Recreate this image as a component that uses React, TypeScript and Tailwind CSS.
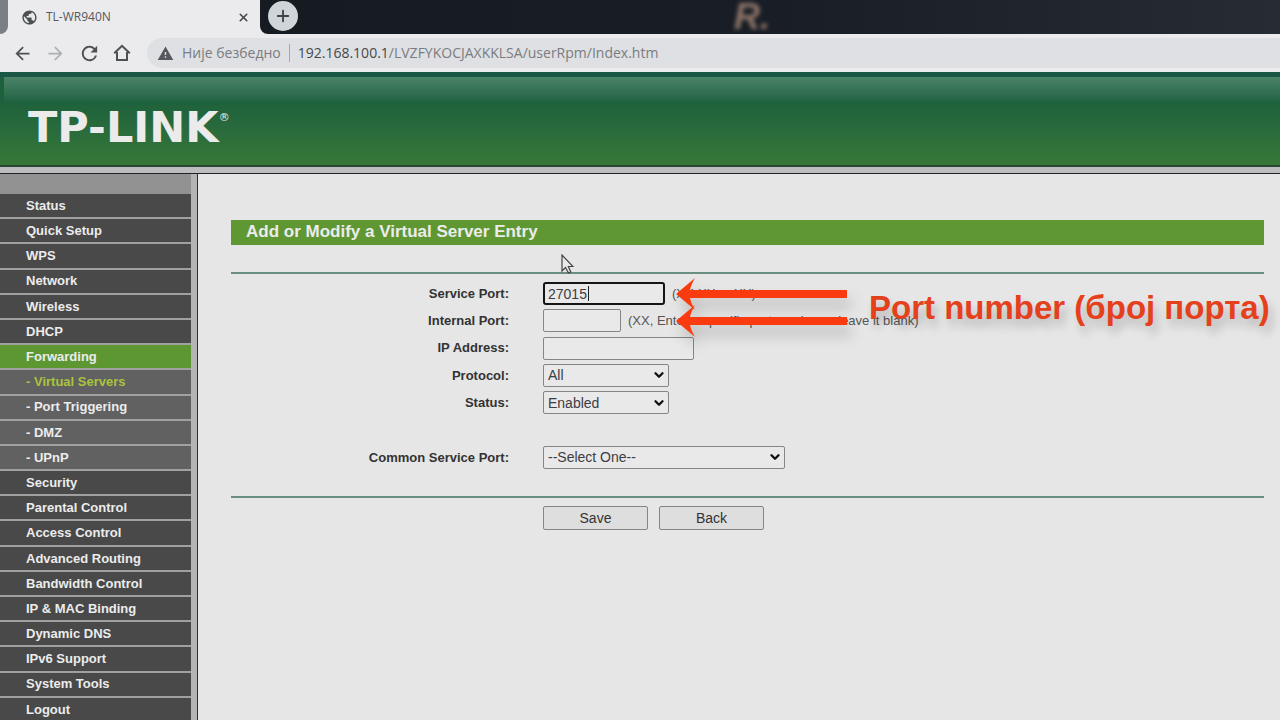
import type { ReactNode } from 'react';
import { ChevronDown, Plus, X } from 'lucide-react';
import { MdArrowBack, MdArrowForward, MdPublic, MdRefresh, MdWarning } from 'react-icons/md';

type MenuItem = { label: string; kind?: 'active' | 'sub' | 'current' };

const menu: MenuItem[] = [
  { label: 'Status' },
  { label: 'Quick Setup' },
  { label: 'WPS' },
  { label: 'Network' },
  { label: 'Wireless' },
  { label: 'DHCP' },
  { label: 'Forwarding', kind: 'active' },
  { label: '- Virtual Servers', kind: 'current' },
  { label: '- Port Triggering', kind: 'sub' },
  { label: '- DMZ', kind: 'sub' },
  { label: '- UPnP', kind: 'sub' },
  { label: 'Security' },
  { label: 'Parental Control' },
  { label: 'Access Control' },
  { label: 'Advanced Routing' },
  { label: 'Bandwidth Control' },
  { label: 'IP & MAC Binding' },
  { label: 'Dynamic DNS' },
  { label: 'IPv6 Support' },
  { label: 'System Tools' },
  { label: 'Logout' },
];

const itemStyles = {
  normal: 'bg-[#494949] text-[#ececec]',
  active: 'bg-[#5d9732] text-[#ececec]',
  sub: 'bg-[#616161] text-[#ececec]',
  current: 'bg-[#616161] text-[#a9c43c]',
};

const inputClass = 'h-[23px] rounded-[2px] border border-[#858585] bg-[#e9e9e9] px-1 text-sm text-[#3c3c44] outline-none';

const buttonClass = 'h-6 w-[105px] rounded-[2px] border border-[#858585] bg-[#dedede] text-sm text-[#333]';

function HomeIcon() {
  return (
    <svg viewBox="0 0 18 18" className="size-[18px]" fill="none" stroke="currentColor" strokeWidth="2">
      <path d="M1.200 9.300 L9 1.800 L16.800 9.300 M4 8 V16 H14 V8" />
    </svg>
  );
}

function BrowserBar() {
  return (
    <div className="font-['Open_Sans',sans-serif]">
      {/* Tab strip */}
      <div className="flex h-[34px] bg-[#ebebed]">
        <div className="w-2 rounded-br-lg bg-[#7b7e82]" />
        <div className="flex w-[252px] items-center bg-[#ebebed] pl-[13px] pr-[10px]">
          <MdPublic className="size-[17px] text-[#4c4f53]" />
          <span className="ml-2 flex-1 text-xs text-[#55585c]">TL-WR940N</span>
          <button aria-label="Close tab" className="text-[#45484c]">
            <X size={13} strokeWidth={3} />
          </button>
        </div>
        <div className="relative flex flex-1 items-center rounded-bl-lg bg-linear-to-r from-[#161b22] via-[#191e26] via-50% to-[#272b33] pl-2">
          <button
            aria-label="New tab"
            className="mb-[2px] flex size-[30px] items-center justify-center rounded-full bg-[#cfd6da] text-[#3f4347]"
          >
            <Plus size={18} strokeWidth={2.5} />
          </button>
          <span className="absolute top-0 left-[474px] h-[34px] overflow-hidden font-['Liberation_Sans',sans-serif] text-[36px] leading-[34px] font-bold italic text-[#8d7468] blur-[2px]">
            R.
          </span>
        </div>
      </div>

      {/* Toolbar */}
      <div className="flex h-[38px] items-center bg-[#ebebed] pl-3 text-[#4d5054]">
        <div className="flex items-center gap-3">
          <button aria-label="Back"><MdArrowBack size={21} /></button>
          <button aria-label="Forward" className="text-[#adb0b3]"><MdArrowForward size={21} /></button>
          <button aria-label="Reload"><MdRefresh size={23} /></button>
          <button aria-label="Home"><HomeIcon /></button>
        </div>
        <div className="ml-4 flex h-[30px] flex-1 items-center rounded-l-full bg-[#dfe0e3] pl-[10px] text-sm text-[#7a7c80]">
          <MdWarning size={17} className="text-[#55585e]" />
          <span className="ml-2">Није безбедно</span>
          <span className="mx-2 h-[18px] w-px bg-[#a5a7aa]" />
          <span className="whitespace-nowrap">
            <span className="text-[#45484c]">192.168.100.1</span>/LVZFYKOCJAXKKLSA/userRpm/Index.htm
          </span>
        </div>
      </div>
    </div>
  );
}

function Row({ label, htmlFor, children }: { label: string; htmlFor: string; children: ReactNode }) {
  return (
    <div className="flex items-center gap-[34px]">
      <label htmlFor={htmlFor} className="w-[278px] text-right text-[13px] font-bold text-[#333]">
        {label}
      </label>
      <div className="flex items-center">{children}</div>
    </div>
  );
}

function Select({ id, options, width }: { id: string; options: string[]; width: string }) {
  return (
    <div className={`relative ${width}`}>
      <select
        id={id}
        className="h-[23px] w-full appearance-none rounded-[2px] border border-[#858585] bg-[#e9e9e9] px-1 text-sm text-[#3c3c44]"
      >
        {options.map((option) => (
          <option key={option}>{option}</option>
        ))}
      </select>
      <ChevronDown size={14} strokeWidth={4} className="pointer-events-none absolute right-[3px] top-[5px] text-[#111]" />
    </div>
  );
}

function Arrow() {
  return (
    <svg
      viewBox="0 0 172 32"
      className="block h-8 w-[172px] overflow-visible drop-shadow-[4px_10px_7px_rgba(0,0,0,0.2)]"
      fill="#fa3b10"
    >
      <path d="M0 16 L19 0 Q15 7 14 12 L171 12 V20 L14 20 Q15 25 19 32 Z" />
    </svg>
  );
}

export default function App() {
  return (
    <div className="relative flex h-screen flex-col overflow-hidden bg-[#e6e6e6] font-['Liberation_Sans',Arial,sans-serif]">
      <BrowserBar />

      {/* Banner */}
      <header className="border-t-[5px] border-b-2 border-t-[#1b5745] border-b-[#2b4535] bg-linear-to-b from-[#1c603c] from-25% to-[#377838]">
        <div className="ml-1 h-[25px] bg-linear-to-b from-[#4c8369] to-[#1f6342]" />
        <div className="flex h-[63px] items-start pl-7 font-['DejaVu_Sans',sans-serif] font-bold text-[#ebebeb]">
          <span className="text-[43px] leading-[50px]">TP-LINK</span>
          <span className="mt-2 text-[11px] leading-4 font-normal">®</span>
        </div>
      </header>
      <div className="h-[7px] border-b border-[#222] bg-[#bdbdbf]" />

      <div className="flex min-h-0 flex-1">
        {/* Side menu */}
        <nav className="w-[198px] shrink-0 border-r border-[#2c2c2c] bg-[#b4b4b4] pr-[6px]">
          <div className="h-5 bg-[#929292]" />
          <ul className="grid h-[529px] auto-rows-fr bg-[#a0a0a0]">
            {menu.map((item) => (
              <li key={item.label} className="pb-[2px]">
                <a
                  href="#"
                  className={`flex h-full items-center pl-[26px] text-[13px] font-bold ${itemStyles[item.kind ?? 'normal']}`}
                >
                  {item.label}
                </a>
              </li>
            ))}
          </ul>
        </nav>

        {/* Form */}
        <main className="flex-1 pt-[46px] pr-4 pl-[33px]">
          <h1 className="h-[25px] bg-[#5f9733] pl-[15px] text-[17px] leading-6 font-bold text-[#ececec]">
            Add or Modify a Virtual Server Entry
          </h1>
          <form className="mt-[27px]" onSubmit={(e) => e.preventDefault()}>
            <div className="grid h-[226px] auto-rows-fr border-y-2 border-[#6a8f80] pt-[6px] pb-[25px]">
              <Row label="Service Port:" htmlFor="service-port">
                <div className="relative">
                  <input
                    id="service-port"
                    defaultValue="27015"
                    className="h-[23px] w-[122px] rounded-[3px] border-2 border-[#151515] bg-[#e9e9e9] px-[3px] text-sm text-[#3c3c44] outline-none"
                  />
                  <span className="absolute top-1 left-[45px] h-[15px] w-px bg-[#222]" />
                </div>
                <span className="ml-[7px] text-[13px] text-[#555]">(XX-XX or XX)</span>
              </Row>
              <Row label="Internal Port:" htmlFor="internal-port">
                <input id="internal-port" className={`${inputClass} w-[78px]`} />
                <span className="ml-[7px] text-[13px] text-[#555]">(XX, Enter a specific port number or leave it blank)</span>
              </Row>
              <Row label="IP Address:" htmlFor="ip-address">
                <input id="ip-address" className={`${inputClass} w-[151px]`} />
              </Row>
              <Row label="Protocol:" htmlFor="protocol">
                <Select id="protocol" options={['All', 'TCP', 'UDP']} width="w-[126px]" />
              </Row>
              <Row label="Status:" htmlFor="status">
                <Select id="status" options={['Enabled', 'Disabled']} width="w-[126px]" />
              </Row>
              <div />
              <Row label="Common Service Port:" htmlFor="common-port">
                <Select id="common-port" options={['--Select One--', 'DNS', 'FTP', 'HTTP', 'TELNET']} width="w-[242px]" />
              </Row>
            </div>
            <div className="mt-2 ml-[312px] flex gap-[11px]">
              <button className={buttonClass}>Save</button>
              <button className={buttonClass}>Back</button>
            </div>
          </form>
        </main>
      </div>

      {/* Annotation over the form */}
      <div className="pointer-events-none absolute top-[278px] left-[676px] flex items-center gap-[21px]">
        <div className="-space-y-[5px]">
          <Arrow />
          <Arrow />
        </div>
        <p className="text-[33px] leading-9 font-bold whitespace-nowrap text-[#e5401c] [text-shadow:4px_8px_10px_rgba(0,0,0,0.22)]">
          Port number (број порта)
        </p>
      </div>

      {/* Mouse pointer */}
      <svg viewBox="0 0 13 20" className="absolute top-[254px] left-[561px] h-5 w-[13px]" fill="#e9e9e9" stroke="#444" strokeWidth="1.2">
        <path d="M1 1 V17 L4.500 13.500 L7.500 19 L9.800 18 L7.300 12.500 H12 Z" />
      </svg>
    </div>
  );
}
